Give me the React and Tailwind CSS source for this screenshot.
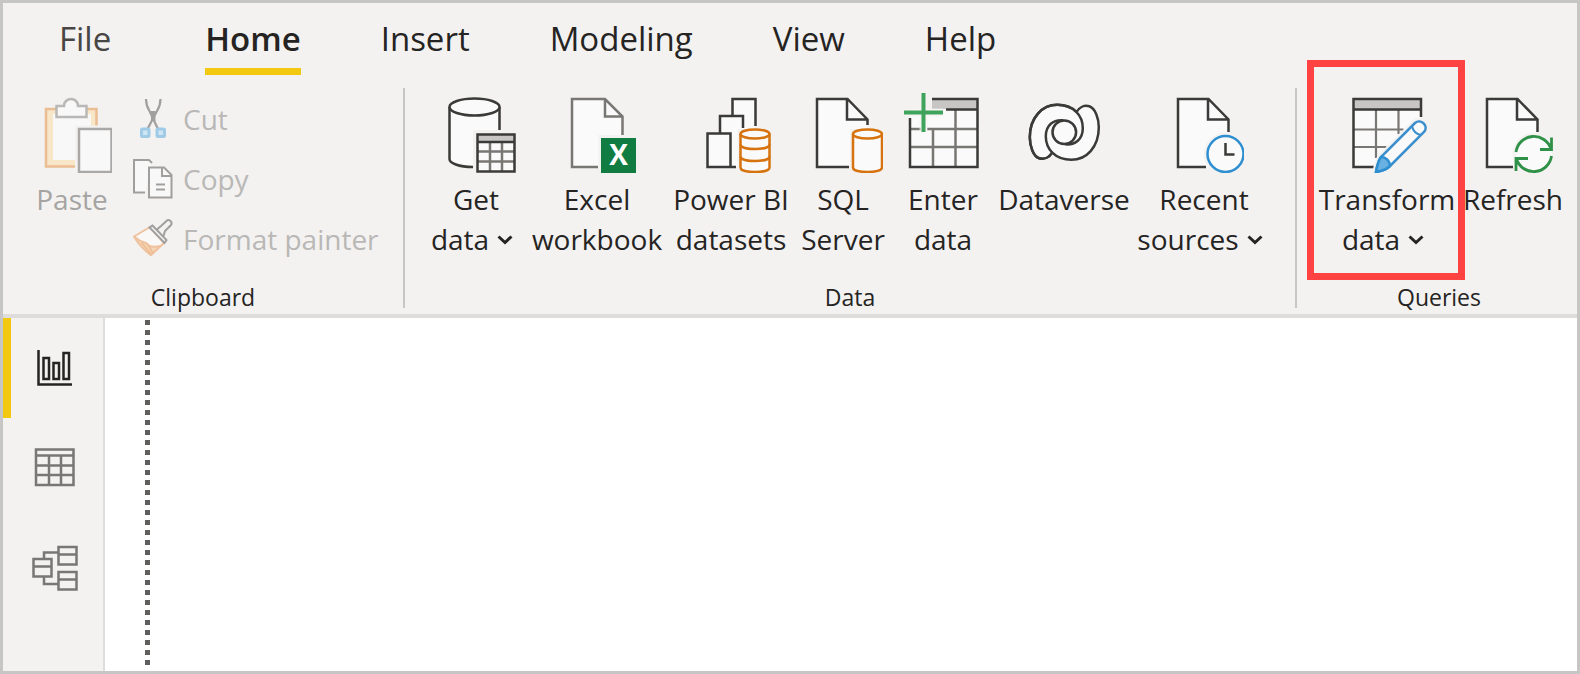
const INK = "#3a3a38";
const MID = "#797774";
const PAPER = "#fafafa";
const ORANGE = "#d6730f";

function Icon({ children }) {
  return (
    <svg viewBox="0 0 80 80" className="block size-20" fill="none" stroke={INK} strokeWidth="2.5" aria-hidden="true">
      {children}
    </svg>
  );
}

function SmallIcon({ children }) {
  return (
    <svg viewBox="0 0 40 40" className="block size-10 shrink-0" fill="none" stroke="#a19f9d" strokeWidth="2" aria-hidden="true">
      {children}
    </svg>
  );
}

function Chevron() {
  return (
    <svg viewBox="0 0 16 12" className="mr-2 ml-2 inline-block h-3 w-4" fill="none" stroke="#252423" strokeWidth="3" aria-hidden="true">
      <path d="M1.5 3.5 8 9.5l6.5-6" />
    </svg>
  );
}

function PasteIcon() {
  return (
    <Icon>
      <path d="M14 16H64.500V73.500H14z" fill="#f7e6c8" stroke="none" />
      <path d="M21 21h38v46H21z" fill="#f8f8f8" stroke="none" />
      <path d="M43 73.500H14V16H64.500V33" stroke="#ebbd92" />
      <path d="M43 32.500H68V76H43z" fill="#f3f2f1" stroke="none" />
      <path d="M24.500 24V13h7.500c0-4 3-7 7-7s7 3 7 7h8.500v11z" fill="#f8f8f8" stroke="#b9b8b6" />
      <path d="M47 36h32.500v43H47z" fill="#f8f8f8" stroke="#a9a8a6" />
    </Icon>
  );
}

function CutIcon() {
  return (
    <SmallIcon>
      <path d="M13 0c0 4 1 8 3.500 12L25 30M27.500 0c0 4-1 8-3.500 12L14.500 30" strokeWidth="2.200" />
      <path d="M20.200 12v10" strokeWidth="4.500" />
      <rect x="8.500" y="30" width="7.500" height="7.500" rx="1" fill="#cfe5f3" stroke="#9fcbe6" strokeWidth="3" />
      <rect x="24" y="30" width="7.500" height="7.500" rx="1" fill="#cfe5f3" stroke="#9fcbe6" strokeWidth="3" />
    </SmallIcon>
  );
}

function CopyIcon() {
  return (
    <SmallIcon>
      <path d="M12 33.500H1V1h15l3 3" fill="#f8f8f8" />
      <path d="M16 38.500V8.500h15l7.500 7.500v22.500z" fill="#f8f8f8" />
      <path d="M29 9v8h9.500M23 25.500h9M23 30.500h9" />
    </SmallIcon>
  );
}

function PainterIcon() {
  return (
    <SmallIcon>
      <path d="M17 8 1 17.500c5 8 10 13.500 17 18.500L31 24z" fill="#faf8f6" stroke="#efc3a0" />
      <path d="M1 17.500c5 8 10 13.500 17 18.500l9.500-9c-4 1-8 1-11 0L13 24c-4-1-8-3-12-6.500z" fill="#f5d6b6" stroke="#efc3a0" />
      <path d="m9 24 9 11M15 26l5 8" stroke="#eebb92" strokeWidth="1.500" />
      <path d="m19.500 6.500 14 14.500-2 3-15-15.500zM24 10.500l4-3.500 6-5.500c2-1.500 6 1.500 4 4.500L32 12l-1.500 5" fill="#f3f2f1" />
    </SmallIcon>
  );
}

function Cylinder({ x }) {
  return (
    <path
      d={`M${x} 41v33.500c0 6 29 6 29 0V41`}
      fill={PAPER}
      stroke={ORANGE}
    />
  );
}

function GetDataIcon() {
  return (
    <Icon>
      <path d="M37 74C24 73 13.500 70 13.500 65V14h50v25L40 74z" fill={PAPER} stroke="none" />
      <path d="M63.500 37V14M13.500 14v52c0 4 9 8 23.500 8" />
      <ellipse cx="38.500" cy="14" rx="25" ry="8.500" fill={PAPER} />
      <path d="M37 37h43v43H37z" fill="#f3f2f1" stroke="none" />
      <path d="M41.500 41.500h37v37h-37z" fill={PAPER} stroke="none" />
      <path d="M41.500 41.500h37v7h-37z" fill="#c8c6c4" stroke="none" />
      <path d="M54 49v29M66 49v29M42 58.500h36M42 68.500h36" stroke={MID} />
      <path d="M41.500 41.500h37v37h-37zM41.500 49h37" />
    </Icon>
  );
}

function ExcelIcon() {
  return (
    <Icon>
      <path d="M41 74H15V6h33l17.500 17.500V74z" fill={PAPER} stroke="none" />
      <path d="M41 74H15V6h33l17.500 17.500V42M48 6v17.500h17" stroke={MID} />
      <path d="M41.500 42H70v34H41.500z" fill="#f3f2f1" stroke="none" />
      <path d="M44 45h35v35H44z" fill="#107c41" stroke="none" />
      <text x="61.500" y="72" textAnchor="middle" fontFamily="Open Sans, sans-serif" fontWeight="700" fontSize="28" fill="#fff" stroke="none">
        X
      </text>
    </Icon>
  );
}

function DatasetsIcon() {
  return (
    <Icon>
      <path d="M41.500 74V6H64.500V74z M29 74V23h23v51z M16.500 74V40.500h23V74" fill={PAPER} stroke="none" />
      <path d="M41.500 22V6h23v27M29 40V23h23v12M45 74H16.500V40.500h23V74" />
      <path d="M46.500 36H67v40H46.500z" fill="#f3f2f1" stroke="none" />
      <Cylinder x={49.5} />
      <ellipse cx="64" cy="41" rx="14.500" ry="4.500" fill={PAPER} stroke={ORANGE} />
      <path d="M49.500 51.500c0 6 29 6 29 0M49.500 63.500c0 6 29 6 29 0" stroke={ORANGE} />
    </Icon>
  );
}

function Page({ down, across }) {
  return (
    <>
      <path d="M14 74V6h30.500L64.500 26.500V50L45 74z" fill={PAPER} stroke="none" />
      <path d={`M${across} 74H14V6h30.500L64.500 26.500V${down}M44 6v20.500H64.500`} />
    </>
  );
}

function SqlIcon() {
  return (
    <Icon>
      <Page down={32} across={46} />
      <path d="M47 36h20v42H47z" fill="#f3f2f1" stroke="none" />
      <Cylinder x={50} />
      <ellipse cx="64.500" cy="41" rx="14.500" ry="4.500" fill={PAPER} stroke={ORANGE} />
    </Icon>
  );
}

function EnterIcon() {
  return (
    <Icon>
      <path d="M7 16h68v58H7z" fill={PAPER} stroke="none" />
      <path d="M29 6h46v10H29z" fill="#c8c6c4" stroke="none" />
      <path d="M7 36h11M24 36h50M7 54h67M30 36v37M52.500 16v57" stroke={MID} />
      <path d="M29 6h45.500v68H7V25M43 16.500h31" />
      <path d="M1 19.500h39M20.500 0v39" stroke="#f3f2f1" strokeWidth="8" opacity="0.700" />
      <path d="M1 19.500h39M20.500 0v39" stroke="#3fa35c" strokeWidth="4" />
    </Icon>
  );
}

function DataverseIcon() {
  const arm = "M-12 20C-15 25-20 27.500-25 26-31 24-34.500 14-34.500 5-34.500-15-22-27.500-7-27.500 9-27.500 18.500-17 18.500-4 18.500 7 11 13 1 12";
  return (
    <Icon>
      <g transform="translate(40.300 39.300)">
        <path d={arm} fill={PAPER} />
        <path d={arm} fill={PAPER} transform="rotate(180)" />
        <path d={arm} />
        <circle r="11.800" fill={PAPER} />
      </g>
    </Icon>
  );
}

function RecentIcon() {
  return (
    <Icon>
      <Page down={39} across={42} />
      <circle cx="61.500" cy="61" r="21.500" fill="#f3f2f1" stroke="none" />
      <circle cx="61.500" cy="61" r="18" fill={PAPER} stroke="#2e8fd0" />
      <path d="M61.500 50v11.500h9" />
    </Icon>
  );
}

function TransformIcon() {
  return (
    <Icon>
      <path d="M6.500 6h67.500v20L30 74H6.500z" fill={PAPER} stroke="none" />
      <path d="M6.500 6h67.500v10.500H6.500z" fill="#c8c6c4" stroke="none" />
      <path d="M29 17v48M51.500 17v24M6.500 36.500h50M6.500 54h33" stroke={MID} strokeWidth="2.200" />
      <path d="M27 74H6.500V6H74v18M6.500 16.500H74" />
      <path d="M29 79c1-6 2-11 5-15L68 30c6-5 14 3 9 9L43 73c-3 3-8 5-14 6z" fill={PAPER} stroke="#f3f2f1" strokeWidth="7" />
      <path d="M29 79c1-6 2-11 5-15L68 30c6-5 14 3 9 9L43 73c-3 3-8 5-14 6z" fill={PAPER} stroke="#3a8fcc" />
      <path d="M29 79c1-6 2-11 5-15 5 0 9 4 9 9-3 3-8 5-14 6z" fill="#69b1e3" stroke="#2e8fd0" />
      <path d="M65 33c1 5 4 8 9 9" stroke="#3a8fcc" strokeWidth="2" />
    </Icon>
  );
}

function RefreshIcon() {
  return (
    <Icon>
      <Page down={39} across={40} />
      <circle cx="60.500" cy="61" r="21" fill="#f3f2f1" stroke="none" />
      <circle cx="60.500" cy="61" r="18" fill={PAPER} stroke="none" />
      <g stroke="#2f9148" strokeWidth="2.800">
        <path d="M43 59a18 18 0 0 1 35-3M78.500 44.500V56.500H67" />
        <path d="M78.500 63a18 18 0 0 1-35 3M43 78V65.500h12" />
      </g>
    </Icon>
  );
}

function BigButton({ icon, lines, menu, className = "", children, ...rest }) {
  return (
    <button type="button" className={`relative flex shrink-0 flex-col items-center text-[28px] leading-10 whitespace-nowrap ${className}`} {...rest}>
      {icon}
      <span className="mt-1.5 block">{lines[0]}</span>
      {lines[1] && (
        <span className="flex items-center">
          {lines[1]}
          {menu && <Chevron />}
        </span>
      )}
      {children}
    </button>
  );
}

function SmallButton({ icon, label }) {
  return (
    <button type="button" disabled className="flex h-10 items-center gap-2.5 text-[28px] leading-10 whitespace-nowrap text-[#b9b8b6]">
      {icon}
      {label}
    </button>
  );
}

function Group({ title, className, children }) {
  return (
    <section aria-label={title} className={`flex h-[220px] flex-col justify-between ${className}`}>
      <div className="flex pt-[5px]">{children}</div>
      <h2 className="text-center text-[23px] leading-[22px]">{title}</h2>
    </section>
  );
}

function Tab({ label, active, className = "" }) {
  return (
    <button
      type="button"
      role="tab"
      aria-selected={!!active}
      className={`border-b-[7px] pt-3 pb-[5px] text-[33px] leading-[48px] ${active ? "border-[#f2c811] font-semibold" : "border-transparent"} ${className}`}
    >
      {label}
    </button>
  );
}

function ViewButton({ label, active, children }) {
  return (
    <button
      type="button"
      aria-label={label}
      className={`flex h-[100px] w-full items-center justify-center border-l-8 pr-1 ${active ? "border-[#f2c811]" : "border-transparent"}`}
    >
      <svg viewBox="0 0 48 48" className="block size-12" fill="none" stroke={active ? "#252423" : MID} strokeWidth="2.500" aria-hidden="true">
        {children}
      </svg>
    </button>
  );
}

export default function App() {
  return (
    <div className="flex min-h-screen flex-col overflow-hidden border-[3px] border-[#c6c6c4] bg-[#f3f2f1] font-['Open_Sans','Noto_Sans',sans-serif] text-[#252423]">
      <div role="tablist" className="flex gap-20 pl-14">
        <Tab label="File" className="mr-3.5 text-[#484644]" />
        <Tab label="Home" active />
        <Tab label="Insert" />
        <Tab label="Modeling" />
        <Tab label="View" />
        <Tab label="Help" />
      </div>

      <div className="flex border-b-4 border-[#dedddc] pt-[13px] pb-1.5">
        <Group title="Clipboard" className="w-[400px] shrink-0">
          <BigButton icon={<PasteIcon />} lines={["Paste"]} disabled className="ml-5 w-[98px] text-[#a5a4a2]" />
          <div className="ml-3 flex flex-col gap-5 pt-1.5">
            <SmallButton icon={<CutIcon />} label="Cut" />
            <SmallButton icon={<CopyIcon />} label="Copy" />
            <SmallButton icon={<PainterIcon />} label="Format painter" />
          </div>
        </Group>
        <Group title="Data" className="shrink-0 border-x-2 border-[#c8c6c4] px-5">
          <BigButton icon={<GetDataIcon />} lines={["Get", "data"]} menu className="w-[102px]" />
          <BigButton icon={<ExcelIcon />} lines={["Excel", "workbook"]} className="w-[140px]" />
          <BigButton icon={<DatasetsIcon />} lines={["Power BI", "datasets"]} className="w-[128px]" />
          <BigButton icon={<SqlIcon />} lines={["SQL", "Server"]} className="w-[96px]" />
          <BigButton icon={<EnterIcon />} lines={["Enter", "data"]} className="w-[104px]" />
          <BigButton icon={<DataverseIcon />} lines={["Dataverse"]} className="w-[138px]" />
          <BigButton icon={<RecentIcon />} lines={["Recent", "sources"]} menu className="w-[142px]" />
        </Group>
        <Group title="Queries" className="shrink-0 pl-4">
          <BigButton icon={<TransformIcon />} lines={["Transform", "data"]} menu className="z-10 w-[148px]">
            <span className="pointer-events-none absolute -top-[33px] -right-1 -left-1.5 h-[220px] border-[7px] border-[#ff4343]" />
          </BigButton>
          <BigButton icon={<RefreshIcon />} lines={["Refresh"]} className="w-[104px]" />
        </Group>
      </div>

      <div className="flex flex-1">
        <nav aria-label="Views" className="w-[102px] shrink-0 border-r-2 border-[#dedddc]">
          <ViewButton label="Report" active>
            <path d="M7.500 6v34.500H41" />
            <path d="M12.500 14h5.500v21h-5.500zM22.500 19H28v16h-5.500zM32.500 9H38v26h-5.500z" />
          </ViewButton>
          <ViewButton label="Data">
            <path d="M5 5.500h37.500V41H5zM5 11.500h37.500M5 21.500h37.500M5 31h37.500M18 11.500V41M30 11.500V41" />
          </ViewButton>
          <ViewButton label="Model">
            <path d="M27.500 3h18v17.500h-18zM27.500 10.500h18M27.500 28h18v17.500h-18zM27.500 35.500h18M2.500 15h18v17.500h-18zM2.500 22.500h18M13 15V8.500h14M13 33v7h14" />
          </ViewButton>
        </nav>
        <main className="flex flex-1 bg-white pt-0.5 pb-1.5 pl-10">
          <div className="w-[5px] bg-[repeating-linear-gradient(to_bottom,#605e5c_0px,#605e5c_5px,transparent_5px,transparent_10px)]" />
        </main>
      </div>
    </div>
  );
}
